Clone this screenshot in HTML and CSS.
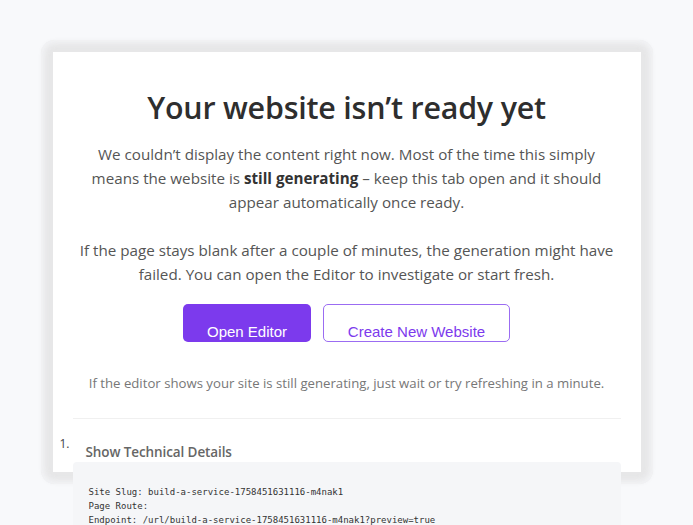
FILE: index.html
```html
<!DOCTYPE html>
<html lang="en">
<head>
<meta charset="utf-8">
<title>Your website isn’t ready yet</title>
<link rel="stylesheet" href="styles.css">
</head>
<body>
<main class="page">
  <section class="card">
    <h1 class="title">Your website isn’t ready yet</h1>
    <p class="lead">We couldn’t display the content right now. Most of the time this simply means the website is <strong>still generating</strong> – keep this tab open and it should appear automatically once ready.</p>
    <p class="lead">If the page stays blank after a couple of minutes, the generation might have failed. You can open the Editor to investigate or start fresh.</p>
    <div class="actions">
      <a class="btn btn-primary" href="#">Open Editor</a>
      <a class="btn btn-outline" href="#">Create New Website</a>
    </div>
    <p class="note">If the editor shows your site is still generating, just wait or try refreshing in a minute.</p>
    <div class="details">
      <div class="summary"><span class="marker">1.</span><span class="summary-text">Show Technical Details</span></div>
      <pre class="tech">
Site Slug: build-a-service-1758451631116-m4nak1
Page Route:
Endpoint: /url/build-a-service-1758451631116-m4nak1?preview=true</pre>
    </div>
  </section>
</main>
</body>
</html>
```

FILE: styles.css
```css
html, body {
  margin: 0;
  padding: 0;
  height: 100%;
  overflow: hidden;
}
body {
  background: #f8f9fb;
  font-family: "Open Sans", "Noto Sans", sans-serif;
  color: #333;
}
.page {
  display: flex;
  justify-content: center;
  padding-top: 52px;
}
.card {
  position: relative;
  width: 588px;
  height: 420px;
  box-sizing: border-box;
  background: #fff;
  padding: 36px 20px 0;
  text-align: center;
}
.card::before {
  content: "";
  position: absolute;
  inset: -12px;
  z-index: -1;
  border-radius: 14px;
  background: #e7e7e8;
  box-shadow: inset 0 0 6px 3px rgba(246, 247, 249, 0.85), 0 0 4px rgba(0, 0, 0, 0.03);
}
.title {
  margin: 0 0 14px;
  font-size: 30.4px;
  font-weight: 600;
  line-height: 40px;
  color: #2e2e2e;
  letter-spacing: -0.2px;
}
.lead {
  max-width: 540px;
  margin: 0 auto 24px;
  font-size: 15.2px;
  line-height: 24px;
  color: #555;
}
.lead strong {
  font-weight: 700;
  color: #333;
}
.lead + .lead {
  margin-bottom: 18px;
}
.actions {
  display: flex;
  justify-content: center;
  gap: 12px;
}
.btn {
  display: block;
  box-sizing: border-box;
  height: 38px;
  padding: 19px 23px 0;
  font-family: "Liberation Sans", Arial, sans-serif;
  font-size: 15px;
  line-height: 17px;
  text-decoration: none;
  border-radius: 5px;
}
.btn-primary {
  background: #7c3aed;
  color: #fff;
  width: 128px;
}
.btn-outline {
  background: #fff;
  color: #7c3aed;
  border: 1px solid #9b6cf2;
  padding-top: 18px;
  width: 187px;
}
.note {
  margin: 31px 0 0;
  font-size: 13.2px;
  line-height: 20px;
  color: #777;
  padding-bottom: 25px;
  border-bottom: 1px solid #f0f0f0;
}
.details {
  text-align: left;
}
.summary {
  display: flex;
  align-items: flex-start;
  padding-top: 18px;
  margin-left: -13px;
}
.marker {
  font-size: 12px;
  line-height: 14px;
  color: #444;
  width: 26px;
}
.summary-text {
  font-size: 13.5px;
  font-weight: 600;
  color: #666;
  line-height: 20px;
  margin-top: 5px;
  letter-spacing: -0.1px;
}
.tech {
  margin: 0;
  background: #f5f6f8;
  border-radius: 4px;
  padding: 23px 16px 16px;
  font-family: "DejaVu Sans Mono", "Liberation Mono", monospace;
  font-size: 9px;
  line-height: 14px;
  color: #333;
  position: relative;
}
```
